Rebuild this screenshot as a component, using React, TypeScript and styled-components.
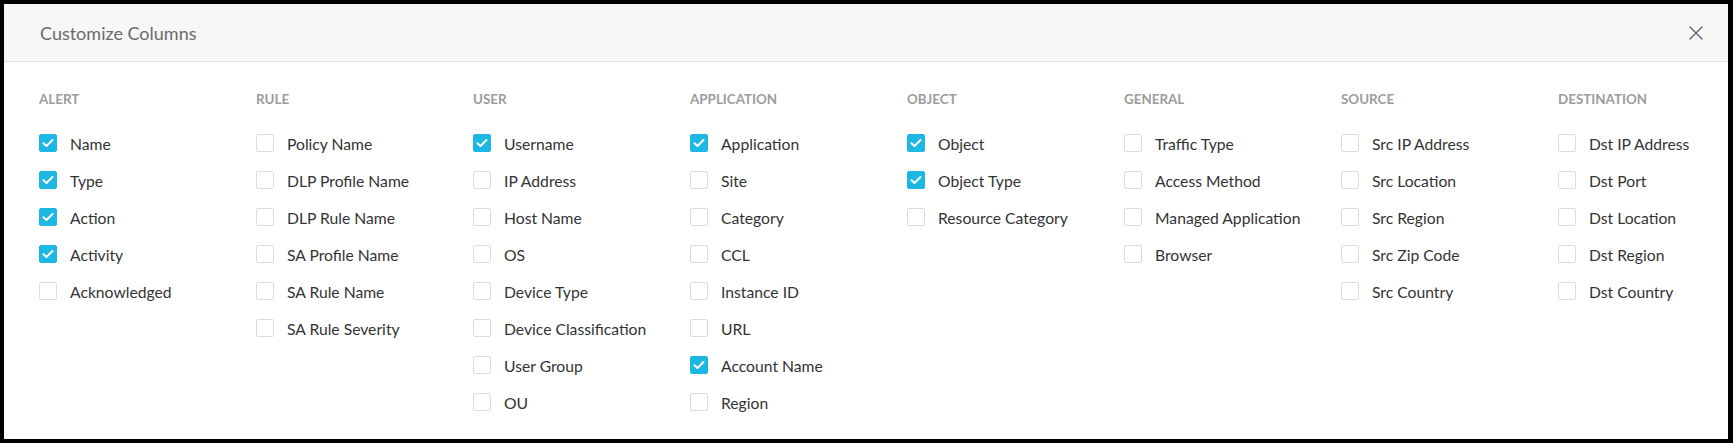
import React, { useState } from "react";
import styled, { createGlobalStyle } from "styled-components";

const Global = createGlobalStyle`
  html, body { margin: 0; padding: 0; background: #000; }
  body { font-family: Lato, "Open Sans", sans-serif; }
  * { box-sizing: border-box; }
`;

const Modal = styled.div`
  width: 1733px;
  height: 443px;
  border: 4px solid #000;
  border-right-width: 5px;
  background: #fff;
  overflow: hidden;
  display: flex;
  flex-direction: column;
`;

const Header = styled.div`
  height: 58px;
  flex: none;
  background: #f7f7f7;
  border-bottom: 1px solid #e2e2e2;
  display: flex;
  align-items: center;
  justify-content: space-between;
  padding: 0 24px 0 36px;
`;

const Title = styled.h2`
  margin: 0;
  font-family: Lato, sans-serif;
  font-weight: 400;
  font-size: 18px;
  color: #6b6b6b;
`;

const CloseButton = styled.button`
  border: none;
  background: none;
  padding: 0;
  width: 16px;
  height: 16px;
  display: flex;
  align-items: center;
  justify-content: center;
  cursor: pointer;
  color: #566577;
`;

const Body = styled.div`
  display: grid;
  grid-template-columns: repeat(8, 217px);
  padding: 29px 0 0 35px;
`;

const Column = styled.div`
  display: flex;
  flex-direction: column;
`;

const Heading = styled.div`
  font-family: Lato, sans-serif;
  font-weight: 700;
  font-size: 13.4px;
  line-height: 16px;
  color: #9c9c9c;
  text-transform: uppercase;
  margin-bottom: 27px;
`;

const List = styled.div`
  display: flex;
  flex-direction: column;
  gap: 19px;
`;

const Row = styled.label`
  display: flex;
  align-items: center;
  height: 18px;
  cursor: pointer;
  white-space: nowrap;
`;

const Box = styled.span<{ $checked: boolean }>`
  width: 18px;
  height: 18px;
  flex: none;
  border-radius: 2px;
  border: 1px solid ${(p) => (p.$checked ? "#1db7e3" : "#dcdcdc")};
  background: ${(p) => (p.$checked ? "#1db7e3" : "#fff")};
  display: flex;
  align-items: center;
  justify-content: center;
`;

const Label = styled.span`
  margin-left: 13px;
  font-family: Lato, sans-serif;
  font-size: 15.7px;
  line-height: 18px;
  color: #333;
  padding-top: 2px;
`;

type Item = [string, boolean];
const columns: { title: string; items: Item[] }[] = [
  { title: "Alert", items: [["Name", true], ["Type", true], ["Action", true], ["Activity", true], ["Acknowledged", false]] },
  { title: "Rule", items: [["Policy Name", false], ["DLP Profile Name", false], ["DLP Rule Name", false], ["SA Profile Name", false], ["SA Rule Name", false], ["SA Rule Severity", false]] },
  { title: "User", items: [["Username", true], ["IP Address", false], ["Host Name", false], ["OS", false], ["Device Type", false], ["Device Classification", false], ["User Group", false], ["OU", false]] },
  { title: "Application", items: [["Application", true], ["Site", false], ["Category", false], ["CCL", false], ["Instance ID", false], ["URL", false], ["Account Name", true], ["Region", false]] },
  { title: "Object", items: [["Object", true], ["Object Type", true], ["Resource Category", false]] },
  { title: "General", items: [["Traffic Type", false], ["Access Method", false], ["Managed Application", false], ["Browser", false]] },
  { title: "Source", items: [["Src IP Address", false], ["Src Location", false], ["Src Region", false], ["Src Zip Code", false], ["Src Country", false]] },
  { title: "Destination", items: [["Dst IP Address", false], ["Dst Port", false], ["Dst Location", false], ["Dst Region", false], ["Dst Country", false]] },
];

const Check = () => (
  <svg width="12" height="10" viewBox="0 0 12 10" fill="none">
    <path d="M1.5 5.2 L4.5 8 L10.5 2" stroke="#fff" strokeWidth="2" strokeLinecap="round" strokeLinejoin="round" />
  </svg>
);

export default function App() {
  const [state, setState] = useState(() =>
    columns.map((c) => c.items.map((i) => i[1]))
  );
  const toggle = (ci: number, ii: number) =>
    setState((s) => s.map((col, a) => (a === ci ? col.map((v, b) => (b === ii ? !v : v)) : col)));

  return (
    <>
      <Global />
      <Modal>
        <Header>
          <Title>Customize Columns</Title>
          <CloseButton aria-label="Close">
            <svg width="14" height="14" viewBox="0 0 14 14">
              <path d="M1 1 L13 13 M13 1 L1 13" stroke="currentColor" strokeWidth="1.4" strokeLinecap="round" />
            </svg>
          </CloseButton>
        </Header>
        <Body>
          {columns.map((col, ci) => (
            <Column key={col.title}>
              <Heading>{col.title}</Heading>
              <List>
                {col.items.map(([name], ii) => (
                  <Row key={name} onClick={() => toggle(ci, ii)}>
                    <Box $checked={state[ci][ii]}>{state[ci][ii] && <Check />}</Box>
                    <Label>{name}</Label>
                  </Row>
                ))}
              </List>
            </Column>
          ))}
        </Body>
      </Modal>
    </>
  );
}
